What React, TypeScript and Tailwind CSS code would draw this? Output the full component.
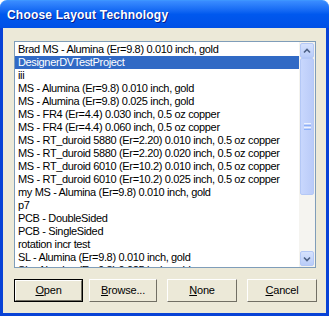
import React from "react";

const rows = [
  "Brad MS - Alumina (Er=9.8) 0.010 inch, gold",
  "DesignerDVTestProject",
  "iii",
  "MS - Alumina (Er=9.8) 0.010 inch, gold",
  "MS - Alumina (Er=9.8) 0.025 inch, gold",
  "MS - FR4 (Er=4.4) 0.030 inch, 0.5 oz copper",
  "MS - FR4 (Er=4.4) 0.060 inch, 0.5 oz copper",
  "MS - RT_duroid 5880 (Er=2.20) 0.010 inch, 0.5 oz copper",
  "MS - RT_duroid 5880 (Er=2.20) 0.020 inch, 0.5 oz copper",
  "MS - RT_duroid 6010 (Er=10.2) 0.010 inch, 0.5 oz copper",
  "MS - RT_duroid 6010 (Er=10.2) 0.025 inch, 0.5 oz copper",
  "my MS - Alumina (Er=9.8) 0.010 inch, gold",
  "p7",
  "PCB - DoubleSided",
  "PCB - SingleSided",
  "rotation incr test",
  "SL - Alumina (Er=9.8) 0.010 inch, gold",
  "SL - Alumina (Er=9.8) 0.025 inch, gold",
];

function Btn({ label, u, w, def }: { label: string; u: number; w: string; def?: boolean }) {
  return (
    <div className={`${w} h-[23px] ${def ? "border border-black" : ""} bg-[#ECE9D8]`}>
      <div
        className="h-full w-full border-t border-l border-t-white border-l-white border-r border-b border-r-[#716F64] border-b-[#716F64] flex items-center justify-center text-[11px] tracking-[-0.2px] text-black"
        style={{ fontFamily: '"Liberation Sans", Arial, sans-serif' }}
      >
        <span>
          {label.slice(0, u)}
          <span className="underline">{label.charAt(u)}</span>
          {label.slice(u + 1)}
        </span>
      </div>
    </div>
  );
}

export default function App() {
  return (
    <div className="w-[329px] h-[316px] flex flex-col bg-white">
      <div className="h-[28px] shrink-0 rounded-t-[7px] bg-gradient-to-b from-[#3A8CFF] via-[#0058EE] to-[#0050E6] border-t border-t-[#3D95FF] flex items-center pl-[7px]">
        <span
          className="text-white font-bold text-[12px] tracking-[0.2px] leading-none [text-shadow:1px_1px_0_#0A1E8C]"
          style={{ fontFamily: '"Liberation Sans", Arial, sans-serif' }}
        >
          Choose Layout Technology
        </span>
      </div>
      <div className="flex-1 bg-[#ECE9D8] border-l-[3px] border-r-[3px] border-b-[3px] border-[#0842D6] flex flex-col pl-[11px] pt-[13px]">
        <div className="w-[302px] h-[227px] border border-[#7F9DB9] bg-white flex overflow-hidden">
          <div
            className="flex-1 pt-[1px] overflow-hidden text-[11px] tracking-[-0.35px] text-black"
            style={{ fontFamily: '"Liberation Sans", Arial, sans-serif' }}
          >
            {rows.map((r, i) => (
              <div
                key={i}
                className={`h-[13px] leading-[13px] pl-[3px] whitespace-nowrap ${
                  i === 1 ? "bg-[#316AC5] text-white" : ""
                }`}
              >
                {r}
              </div>
            ))}
          </div>
          <div className="w-[16px] shrink-0 bg-[#F4F3EE] flex flex-col">
            <div className="h-[15px] mx-[1px] mt-[1px] rounded-[2px] border border-[#B4C8F6] bg-gradient-to-b from-[#D6E2FD] to-[#B9CCF8] flex items-center justify-center">
              <svg width="8" height="6" viewBox="0 0 8 6">
                <path d="M1 4.5 L4 1.5 L7 4.5" stroke="#4D6185" strokeWidth="1.6" fill="none" />
              </svg>
            </div>
            <div className="h-[137px] mx-[1px] rounded-[2px] border border-[#B4C8F6] bg-gradient-to-r from-[#C8D7FD] to-[#BACBF8] flex items-center justify-center">
              <div className="flex flex-col gap-[1px]">
                <div className="w-[7px] h-[1px] bg-[#EEF4FE]" />
                <div className="w-[7px] h-[1px] bg-[#8CB0F8]" />
                <div className="w-[7px] h-[1px] bg-[#EEF4FE]" />
                <div className="w-[7px] h-[1px] bg-[#8CB0F8]" />
              </div>
            </div>
            <div className="flex-1 bg-[#F5F4F0]" />
            <div className="h-[15px] mx-[1px] mb-[1px] rounded-[2px] border border-[#B4C8F6] bg-gradient-to-b from-[#D6E2FD] to-[#B9CCF8] flex items-center justify-center">
              <svg width="8" height="6" viewBox="0 0 8 6">
                <path d="M1 1.5 L4 4.5 L7 1.5" stroke="#4D6185" strokeWidth="1.6" fill="none" />
              </svg>
            </div>
          </div>
        </div>
        <div className="flex mt-[11px]">
          <Btn label="Open" u={0} w="w-[69px]" def />
          <div className="w-[6px]" />
          <Btn label="Browse..." u={0} w="w-[68px]" />
          <div className="w-[10px]" />
          <Btn label="None" u={0} w="w-[70px]" />
          <div className="w-[10px]" />
          <Btn label="Cancel" u={0} w="w-[70px]" />
        </div>
      </div>
    </div>
  );
}
